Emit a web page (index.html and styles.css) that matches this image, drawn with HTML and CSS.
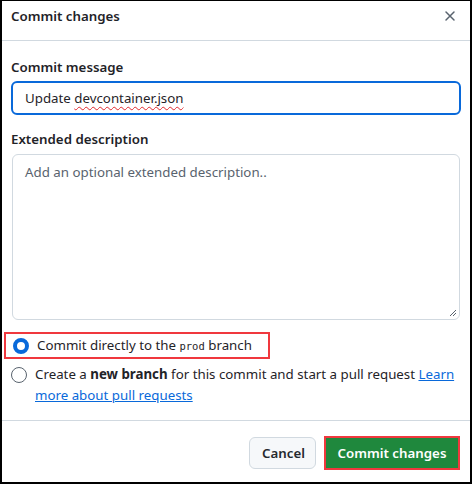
FILE: index.html
```html
<!DOCTYPE html>
<html>
<head>
<meta charset="utf-8">
<link rel="stylesheet" href="styles.css">
</head>
<body>
<div class="dialog">
  <div class="header">
    <div class="title">Commit changes</div>
    <svg class="close" width="12" height="12" viewBox="0 0 12 12"><path d="M2 2L10 10M10 2L2 10" stroke="#59636e" stroke-width="1.5" stroke-linecap="round"/></svg>
  </div>
  <div class="body">
    <div class="label">Commit message</div>
    <div class="input"><span>Update <span class="squiggle">devcontainer.json</span></span></div>
    <div class="label label2">Extended description</div>
    <div class="textarea">
      <span class="placeholder">Add an optional extended description..</span>
      <svg class="grip" width="8" height="8" viewBox="0 0 8 8"><path d="M7 1L1 7M7 4L4 7" stroke="#59636e" stroke-width="1"/></svg>
    </div>
    <div class="options">
      <div class="opt opt1">
        <span class="radio checked"></span>
        <span>Commit directly to the <code>prod</code> branch</span>
      </div>
      <div class="opt opt2">
        <span class="radio"></span>
        <span class="opt2text">Create a <b>new branch</b> for this commit and start a pull request <a href="#">Learn more about pull requests</a></span>
      </div>
    </div>
  </div>
  <div class="footer">
    <button class="btn cancel">Cancel</button>
    <button class="btn primary">Commit changes</button>
  </div>
</div>
</body>
</html>
```
FILE: styles.css
```css
* { box-sizing: border-box; }
body { margin: 0; font-family: "Noto Sans", "Open Sans", sans-serif; color: #1f2328; font-size: 13.3px; }
.dialog { width: 472px; height: 484px; border: 2px solid #000; border-top-width: 1px; background: #fff; display: flex; flex-direction: column; }
.header { height: 40px; border-bottom: 1px solid #d1d9e0; display: flex; align-items: flex-start; justify-content: space-between; padding: 5px 14px 0 9px; flex-shrink: 0; }
.title { font-weight: 600; font-size: 13.3px; line-height: 20px; }
.close { display: block; margin-top: 4px; }
.body { padding: 16px 9px 0 8px; flex: 1; }
.label { font-weight: 600; line-height: 20px; margin-bottom: 4px; padding-left: 1px; }
.label2 { margin-top: 14px; margin-bottom: 5px; }
.input { height: 34px; border: 2px solid #0969da; border-radius: 6px; padding: 0 12px; display: flex; align-items: center; margin-left: 1px; }
.squiggle { text-decoration: underline wavy #e0282e; text-decoration-thickness: 1px; text-underline-offset: 3px; text-decoration-skip-ink: none; }
.textarea { position: relative; height: 166px; border: 1px solid #d1d9e0; border-radius: 6px; padding: 8px 12px; margin: 0 1px 0 2px; }
.placeholder { color: #59636e; }
.grip { position: absolute; right: 2px; bottom: 2px; }
.options { margin-top: 12px; }
.opt { display: flex; align-items: flex-start; gap: 8px; line-height: 21px; }
.opt1 { width: 266px; border: 2px solid #f0383e; margin-left: -6px; padding: 1px 6px 1px 7px; height: 27px; align-items: center; }
.opt2 { margin-top: 5px; padding-left: 1px; line-height: 21px; }
.radio { width: 16px; height: 16px; border-radius: 50%; border: 1px solid #59636e; flex-shrink: 0; background: #fff; margin-top: 3px; }
.opt1 .radio { margin-top: 0; }
.radio.checked { border: 4px solid #0969da; }
code { font-family: "DejaVu Sans Mono", monospace; font-size: 10.5px; }
.opt2text { flex: 1; }
a { color: #0969da; text-decoration: underline; }
.footer { height: 62px; border-top: 1px solid #d1d9e0; display: flex; justify-content: flex-end; align-items: flex-start; gap: 8px; padding: 16px 10px 0 0; flex-shrink: 0; }
.btn { font-family: inherit; font-size: 13.3px; font-weight: 600; height: 32px; border-radius: 6px; padding: 0 12px; white-space: nowrap; }
.cancel { background: #f6f8fa; border: 1px solid #d1d9e0; color: #25292e; width: 67px; }
.primary { background: #1f883d; color: #fff; border: 2px solid #f0383e; border-radius: 0; box-shadow: inset 0 0 0 1px #1f883d; width: 136px; height: 34px; margin-top: -1px; padding: 0 8px; }
```
